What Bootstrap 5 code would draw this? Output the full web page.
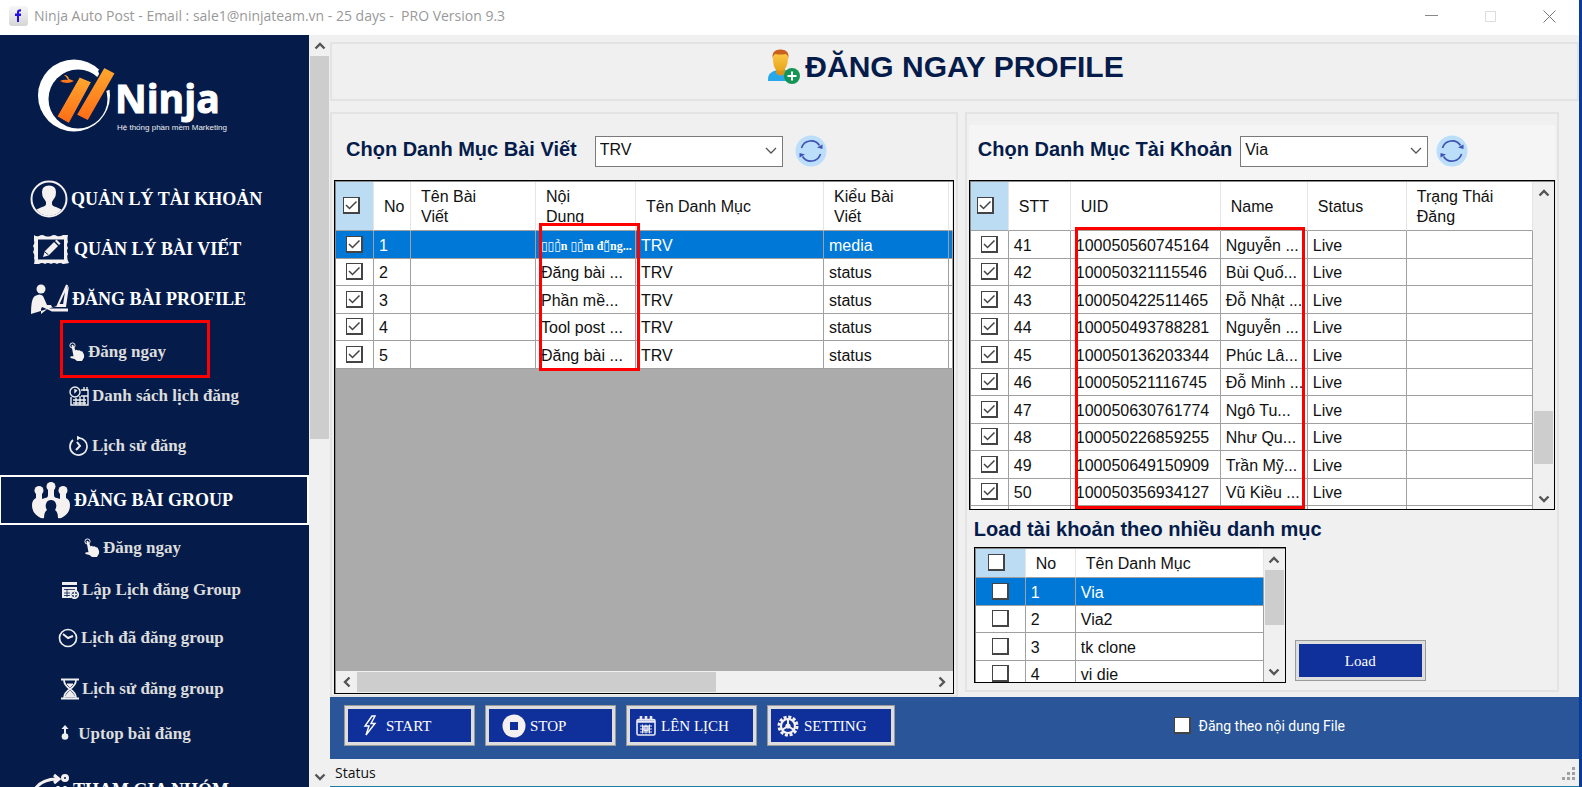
<!DOCTYPE html>
<html lang="vi">
<head>
<meta charset="utf-8">
<meta name="viewport" content="width=device-width, initial-scale=1">
<title>Ninja Auto Post</title>
<link rel="stylesheet" href="https://cdn.jsdelivr.net/npm/bootstrap@5.3.0/dist/css/bootstrap.min.css">
<script src="https://cdn.jsdelivr.net/npm/bootstrap@5.3.0/dist/js/bootstrap.bundle.min.js"></script>
<style>
:root{--navy:#051c4b;--face:#f0f0f0;--line:#a0a0a0;--pick:#0078d7}
body{font:16px/20px "Liberation Sans",Arial,sans-serif;color:#111;background:var(--face);border-right:3px solid #083c96}
.titlebar{height:35px;background:#fff;color:#999;font:14px/20px "Open Sans",sans-serif}
.titlebar button{width:59px;height:32px;background:none;border:0;padding:0}
.sidebar{width:309px;background:var(--navy)}
.menu{display:grid;grid-template-rows:50px 50px 50px 52px 40px 59px 50px 46px 38px 58px 44px 46px 66px;font-family:"Liberation Serif",serif;font-weight:700}
.menu a{display:flex;align-items:center;color:#ddd;font-size:17px;text-decoration:none;white-space:nowrap}
.menu a.top{color:#fff;font-size:18px;padding-left:30px}
.menu a.focused{border:2px solid #fff;border-left-width:1px;padding-left:31px}
.menu svg{flex:none;margin-right:3px}
.in-1{padding-left:58px}.in-2{padding-left:61px}.in-3{padding-left:69px}.in-4{padding-left:84px}
.hot{position:absolute;border:3px solid #f00;pointer-events:none}
.vbar,.hbar{display:flex;flex:none;background:var(--face)}
.vbar{flex-direction:column;width:21px;padding:0 1px}
.hbar{height:22px;padding:1px 0}
.vbar button,.hbar button{flex:none;border:0;padding:0;background:none;display:flex;align-items:center;justify-content:center}
.vbar button{height:21px}.hbar button{width:21px}
.knob{background:#cdcdcd}
.group{border:2px solid #e3e3e3;padding:0 2px}
.caption{font-weight:700;font-size:20px;line-height:24px;color:var(--navy);white-space:nowrap}
.heading{font-weight:700;font-size:30px;line-height:38px;color:var(--navy)}
.pick{width:188px;height:31px;border:1px solid #7a7a7a;border-radius:0;font-size:16px;line-height:20px;padding:0 24px 2px 4px;color:#111;background:#fff url("data:image/svg+xml,%3Csvg xmlns='http://www.w3.org/2000/svg' width='12' height='8'%3E%3Cpath d='M1 1l5 5 5-5' fill='none' stroke='%23555' stroke-width='1.3'/%3E%3C/svg%3E") no-repeat right 5px center;background-size:12px 8px}
.reload{border:0;padding:0;background:none;line-height:0}
.sheet{border:1px solid #000;background:#ababab;box-shadow:inset 1px 1px #888;padding:1px 0 0 1px;overflow:hidden;display:flex}
.sheet table{table-layout:fixed;width:100%;border-collapse:separate;border-spacing:0;background:#fff}
.sheet th{font-weight:400;height:49px;padding:2px 0 0 10px;vertical-align:middle;border-right:1px solid #e5e5e5;border-bottom:1px solid var(--line);overflow:hidden}
.sheet td{height:27px;padding:2px 0 0 5px;border-right:1px solid var(--line);border-bottom:1px solid var(--line);white-space:nowrap;overflow:hidden}
.sheet tr:nth-child(odd) td{height:28px}
.sheet th:first-child{background:#bcdcf4}
.sheet th:first-child,.sheet td:first-child{padding:0;text-align:center}
.sheet th:first-child input{margin-right:7px}
.sheet tr.on td{background:var(--pick);color:#fff}
.sheet.cats th{height:29px}
.box{appearance:none;display:inline-block;vertical-align:middle;width:17px;height:17px;margin:0 0 2px;border:2px solid #444;border-width:1px 2px 2px 1px;background:#fff}
.box:checked{background:#fff url("data:image/svg+xml,%3Csvg xmlns='http://www.w3.org/2000/svg' viewBox='0 0 14 14'%3E%3Cpath d='M2 7l3.500 3.500L12.500 3.500' fill='none' stroke='%23444' stroke-width='1.500'/%3E%3C/svg%3E") center/14px}
.glyphs{font:700 12px/16px "Liberation Serif","DejaVu Sans",serif}
.act{width:131px;height:41px;display:flex;align-items:center;background:#0f2f9b;color:#fff;border:4px solid #dedede;outline:1px solid #9a9a9a;outline-offset:-1px;border-radius:0;padding:0 6px;font:15px/20px "Liberation Serif",serif}
.actions{background:#2a5699;height:62px;padding:0 0 5px 14px;gap:10px}
.small-ui{font:14px/20px Roboto,sans-serif}
.statusbar{height:28px;border-bottom:1px solid #1c7ca6;font:14px/20px "Open Sans",sans-serif}
</style>
</head>
<body class="vh-100 d-flex flex-column overflow-hidden">
<svg width="0" height="0" class="position-absolute">
  <symbol id="up" viewBox="0 0 12 10"><path d="M1.500 7.500L6 3l4.500 4.500" fill="none" stroke="#555" stroke-width="2.400"/></symbol>
  <symbol id="tap" viewBox="0 0 16 20"><circle cx="3.500" cy="3.500" r="2.600" fill="none" stroke="#f5f1f1"/><path d="M2.500 3.500q1-1.500 2 0l2 5 1-.8 1.500.8 1.500-.3 1.500 1 1.500.3q2 3 1.500 6l-2 3.500H8l-2.500-2-4-1q-1-1.500 1-1.800h2z" fill="#f5f1f1"/></symbol>
  <symbol id="sync" viewBox="0 0 32 32"><circle cx="16" cy="16" r="15.500" fill="#bbdefb"/><g fill="none" stroke="#3f51b5" stroke-width="1.600"><path d="M6.500 13a10 10 0 0 1 18-2.500M25.500 19a10 10 0 0 1-18 2.500"/></g><path d="M22 12.500l5.500 1.500V9.500zM10 19.500L4.500 18v4.500z" fill="#3f51b5"/></symbol>
</svg>

<header class="titlebar d-flex align-items-center flex-shrink-0">
  <svg width="20" height="20" class="ms-2 me-1 mb-1 flex-shrink-0"><defs><linearGradient id="fb" x2="0" y2="1"><stop stop-color="#f7f7f7"/><stop offset="1" stop-color="#d5d5d5"/></linearGradient></defs><rect x="1" width="19" height="20" rx="3" fill="url(#fb)"/><path d="M9 16V10H7V7.500h2V6q0-3 4-2.800V5.500h-1q-1 0-1 1v1h2V10h-2v6z" fill="#2410e8"/></svg>
  <span class="flex-grow-1 pb-1" style="padding-left:2px">Ninja Auto Post - Email : sale1@ninjateam.vn - 25 days -&nbsp; PRO Version 9.3</span>
  <button type="button" aria-label="Minimize"><svg width="13" height="13"><path d="M0 3.500h13" stroke="#888"/></svg></button>
  <button type="button" aria-label="Maximize" disabled><svg width="13" height="18"><path d="M1.500 1.500h10v10h-10z" fill="none" stroke="#ddd"/></svg></button>
  <button type="button" aria-label="Close"><svg width="13" height="18"><path d="M.5.5l12 12M12.500.5l-12 12" stroke="#777"/></svg></button>
</header>

<div class="d-flex flex-grow-1 overflow-hidden">
  <aside class="sidebar flex-shrink-0 overflow-hidden">
    <svg width="309" height="139" viewBox="0 35 309 139" class="d-block" role="img" aria-label="Ninja">
      <defs><linearGradient id="or" x2="0" y2="1"><stop stop-color="#ffa82f"/><stop offset="1" stop-color="#ff6b14"/></linearGradient></defs>
      <circle cx="74" cy="95.500" r="36" fill="#fff"/><circle cx="78" cy="99" r="29.500" fill="#051c4b"/>
      <path d="M98 71l8-8 14 6-8 20-6 2z" fill="#051c4b"/>
      <g fill="url(#or)"><path d="M79.500 77l12 5-22.500 41.500-12-7z" stroke="#051c4b"/><path d="M104 67l11.500 6-27.500 48-12-6z" stroke="#051c4b" stroke-width="1.500"/>
      <path d="M60 81q4-2 8-1-1-3-4-5 4 0 5 4l5 2q-7 4-14 0z"/></g>
      <text x="115" y="113" font-family="Open Sans" font-weight="700" font-size="39" fill="#fff" stroke="#fff">Ninja</text>
      <text x="117" y="130" font-family="Liberation Sans" font-size="8" fill="#eee">Hệ thống phần mềm Marketing</text>
    </svg>
    <nav class="menu">
      <a class="top" href="#"><svg width="38" height="38"><circle cx="19" cy="19" r="17.500" fill="none" stroke="#f5f1f1" stroke-width="2"/><path d="M12 12q0-6.500 7-6.500t7 6.500q0 4-1.500 6t-2.500 4v2q0 2 4 3l5.500 2.500Q27 36 19 36T6.500 29.500L12 27q4-1 4-3v-2q-1-2-2.500-4T12 12z" fill="#f5f1f1"/></svg>QUẢN LÝ TÀI KHOẢN</a>
      <a class="top" href="#"><svg width="41" height="34"><path d="M4 3q2 2 5 1 3-2 6 0 3 1 6 0 3-2 6 0 3 1 6-1h5q-1 4 0 7-2 3 0 6-2 3 0 6-2 3 1 9-5 1-6 1-3-2-6 0-3-2-6 0-3-2-6 0-3-2-6 0H4q1-4 0-6 1-3-1-6 2-3 0-6 2-3 1-5z" fill="#f5f1f1"/><path d="M8 7.500h26v20H8z" fill="#051c4b"/><path d="M13 25l2-6L24 10l4 4-9.500 9.500zM25 9l1.500-1.500 4 4L29 13z" fill="#f5f1f1"/><path d="M15 20l3.500 3" stroke="#051c4b"/></svg>QUẢN LÝ BÀI VIẾT</a>
      <a class="top" href="#"><svg width="39" height="32"><circle cx="11" cy="6" r="4.500" fill="#f5f1f1"/><path d="M1 31q0-16 4-18 5-3 8 0l4 9h4l1 2h14l3-21-12 20M18 25.500h20v3H22l-3-1.500-7-3-1 2v5z" fill="#f5f1f1"/><path d="M37 2l-9 20h6z" fill="#051c4b" stroke="#f5f1f1" stroke-width="2"/></svg>ĐĂNG BÀI PROFILE</a>
      <a class="in-3 position-relative pt-1" href="#"><svg width="16" height="20"><use href="#tap"/></svg>Đăng ngay<span class="hot" style="left:60px;top:-4px;width:150px;height:58px"></span></a>
      <a class="in-3" href="#"><svg width="20" height="20" fill="none" stroke="#eee" stroke-width="1.400"><circle cx="6" cy="6" r="5"/><path d="M6 3v3l2-2M2 11v8h17V4h-7M4 14h13M4 17h13M7 12v7M11 10v9M15 10v9M12 10h7M15 1v4M18 1v4"/></svg>Danh sách lịch đăng</a>
      <a class="in-3" href="#"><svg width="20" height="20" fill="none" stroke="#eee" stroke-width="1.700"><path d="M9 2a8.500 8.500 0 1 1-5 2M4 4a8.500 8.500 0 0 0 0 13"/><path d="M8 6l3 4-4 4" stroke-width="2"/><path d="M8 0l3 2-3 2" fill="#eee" stroke-width="1"/></svg>Lịch sử đăng</a>
      <a class="top focused" href="#"><svg width="39" height="38" fill="#f5f1f1"><circle cx="19" cy="5.500" r="4.500"/><circle cx="7" cy="9.500" r="4.500"/><circle cx="31" cy="9.500" r="4.500"/><path d="M16 9h6v5q0 3 3 3l3 1v-6h6v5q4 2 4 7 0 8-7 12-3 2-5 1 0-6-3-8 2-3 1-6-1-4-5-4t-5 4q-1 3 1 6-3 2-3 8-2 1-5-1-7-4-7-12 0-5 4-7v-5h6v6l3-1q3 0 3-3z"/></svg>ĐĂNG BÀI GROUP</a>
      <a class="in-4" href="#"><svg width="16" height="20"><use href="#tap"/></svg>Đăng ngay</a>
      <a class="in-2" href="#"><svg width="18" height="18"><path d="M1 1h15v3H1zM1 6h15v4h-3l-3 3v4H1z" fill="#eee"/><path d="M3 8.500h11M3 12h6M3 14.500h6M6 8v8" stroke="#051c4b" stroke-width=".8"/><circle cx="13.500" cy="13.500" r="3.700" fill="#051c4b" stroke="#eee" stroke-width="1.800"/><path d="M11 13.500h5M13.500 11v5" stroke="#eee" stroke-width="1.500"/></svg>Lập Lịch đăng Group</a>
      <a class="in-1" href="#"><svg width="20" height="20" fill="none" stroke="#eee"><circle cx="10" cy="10" r="8.500" stroke-width="1.700"/><path d="M5 6l5 4 5-2" stroke-width="2"/></svg>Lịch đã đăng group</a>
      <a class="in-2" href="#"><svg width="18" height="22" fill="none" stroke="#eee"><path d="M0 1.500h18M0 20.500h18" stroke-width="2"/><path d="M3 2q0 5 6 9-6 4-6 9M15 2q0 5-6 9 6 4 6 9" stroke-width="1.700"/><path d="M4 19q3-5 5-6 2 1 5 6zM6 6h6l-3 3z" fill="#eee"/></svg>Lịch sử đăng group</a>
      <a class="in-2" href="#"><svg width="10" height="18" fill="#eee"><path d="M4 0l3.500 4H5v5H3V4H.5z"/><circle cx="4" cy="11.500" r="3.300"/></svg>&nbsp;Uptop bài đăng</a>
      <a class="top" href="#"><svg width="40" height="34" fill="none" stroke="#f5f1f1" stroke-width="3"><path d="M5 16Q12 6 27 6M24 2l5 4-5 4"/><circle cx="35" cy="5" r="2.500"/><path d="M28 13v6M35 13v6"/></svg>THAM GIA NHÓM</a>
    </nav>
  </aside>
  <div class="vbar">
    <button type="button" aria-label="Up"><svg width="12" height="10"><use href="#up"/></svg></button>
    <div class="knob" style="height:383px"></div>
    <button type="button" class="mt-auto" aria-label="Down"><svg width="12" height="10" transform="rotate(180)"><use href="#up"/></svg></button>
  </div>

  <main class="flex-grow-1 d-flex flex-column overflow-hidden" style="padding-top:7px">
    <section class="group d-flex justify-content-center align-items-start flex-shrink-0" style="height:59px;padding-right:20px">
      <svg width="34" height="36" class="mt-1 me-1"><defs><linearGradient id="sk" x2="0" y2="1"><stop stop-color="#ffcf4f"/><stop offset="1" stop-color="#e8a41c"/></linearGradient></defs><path d="M1 33q-1-9 9-11h8q10 2 9 11z" fill="#28a8ea"/><path d="M9 20h9v5q-4 5-9 0z" fill="#d9951a"/><path d="M6 10q0-8 7.500-8T21 10q0 12-7.500 13T6 10z" fill="url(#sk)"/><path d="M5.500 12Q4 1 13.500 1.500 23 1 21.500 12q0-5-3-6-5 1-10 0-3 1-3 6z" fill="#c9601c"/><circle cx="25" cy="28" r="8" fill="#159455"/><path d="M20.500 28h9M25 23.500v9" stroke="#fff" stroke-width="2"/></svg>
      <h1 class="heading mb-0 pt-1">ĐĂNG NGAY PROFILE</h1>
    </section>

    <div class="d-flex flex-grow-1 overflow-hidden" style="gap:7px;margin:11px 20px 0 0">
      <section class="group d-flex flex-column overflow-hidden" style="flex:628 1 0">
        <div class="d-flex align-items-center flex-shrink-0 pt-2" style="height:66px;padding-left:12px">
          <label class="caption pb-1" for="post-cat" style="margin-right:18px">Chọn Danh Mục Bài Viết</label>
          <select id="post-cat" class="form-select pick"><option>TRV</option></select>
          <button type="button" class="reload ms-2 ps-1" aria-label="Tải lại"><svg width="32" height="32"><use href="#sync"/></svg></button>
        </div>
        <div class="position-relative flex-grow-1 d-flex flex-column overflow-hidden" style="margin-bottom:1px">
          <div class="sheet flex-grow-1 flex-column">
            <table>
              <colgroup><col style="width:38px"><col style="width:37px"><col style="width:125px"><col style="width:100px"><col style="width:188px"><col style="width:125px"><col></colgroup>
              <thead><tr><th><input class="box" type="checkbox" checked aria-label="Chọn tất cả"></th><th>No</th><th>Tên Bài<br>Viết</th><th>Nội<br>Dung</th><th>Tên Danh Mục</th><th>Kiểu Bài<br>Viết</th><th></th></tr></thead>
              <tbody>
                <tr class="on"><td><input class="box" type="checkbox" checked aria-label="1"></td><td>1</td><td></td><td class="glyphs">▯▯▯̉n ▯▯̉m đ▯̃ng...</td><td>TRV</td><td>media</td><td></td></tr>
                <tr><td><input class="box" type="checkbox" checked aria-label="2"></td><td>2</td><td></td><td>Đăng bài ...</td><td>TRV</td><td>status</td><td></td></tr>
                <tr><td><input class="box" type="checkbox" checked aria-label="3"></td><td>3</td><td></td><td>Phần mề...</td><td>TRV</td><td>status</td><td></td></tr>
                <tr><td><input class="box" type="checkbox" checked aria-label="4"></td><td>4</td><td></td><td>Tool post ...</td><td>TRV</td><td>status</td><td></td></tr>
                <tr><td><input class="box" type="checkbox" checked aria-label="5"></td><td>5</td><td></td><td>Đăng bài ...</td><td>TRV</td><td>status</td><td></td></tr>
              </tbody>
            </table>
            <div class="hbar mt-auto">
              <button type="button" aria-label="Left"><svg width="12" height="10" transform="rotate(-90)"><use href="#up"/></svg></button>
              <div class="knob" style="width:359px"></div>
              <button type="button" class="ms-auto" aria-label="Right"><svg width="12" height="10" transform="rotate(90)"><use href="#up"/></svg></button>
            </div>
          </div>
          <span class="hot" style="left:205px;top:43px;width:101px;height:148px"></span>
        </div>
      </section>

      <section class="group d-flex flex-column overflow-hidden" style="flex:594 1 0;margin-bottom:5px">
        <div class="d-flex align-items-center flex-shrink-0" style="height:55px;margin-top:11px;padding:0 0 3px 9px;background:#f5f5f5">
          <label class="caption pb-1" for="acc-cat" style="margin-right:8px">Chọn Danh Mục Tài Khoản</label>
          <select id="acc-cat" class="form-select pick"><option>Via</option></select>
          <button type="button" class="reload ms-2" aria-label="Tải lại"><svg width="32" height="32"><use href="#sync"/></svg></button>
        </div>
        <div class="position-relative flex-grow-1 overflow-hidden d-flex">
          <div class="sheet flex-grow-1">
            <div class="flex-grow-1 overflow-hidden">
            <table>
              <colgroup><col style="width:38px"><col style="width:62px"><col style="width:150px"><col style="width:87px"><col style="width:99px"><col></colgroup>
              <thead><tr><th><input class="box" type="checkbox" checked aria-label="Chọn tất cả"></th><th>STT</th><th>UID</th><th>Name</th><th>Status</th><th>Trạng Thái<br>Đăng</th></tr></thead>
              <tbody>
                <tr><td><input class="box" type="checkbox" checked aria-label="41"></td><td>41</td><td>100050560745164</td><td>Nguyễn ...</td><td>Live</td><td></td></tr>
                <tr><td><input class="box" type="checkbox" checked aria-label="42"></td><td>42</td><td>100050321115546</td><td>Bùi Quố...</td><td>Live</td><td></td></tr>
                <tr><td><input class="box" type="checkbox" checked aria-label="43"></td><td>43</td><td>100050422511465</td><td>Đỗ Nhật ...</td><td>Live</td><td></td></tr>
                <tr><td><input class="box" type="checkbox" checked aria-label="44"></td><td>44</td><td>100050493788281</td><td>Nguyễn ...</td><td>Live</td><td></td></tr>
                <tr><td><input class="box" type="checkbox" checked aria-label="45"></td><td>45</td><td>100050136203344</td><td>Phúc Lâ...</td><td>Live</td><td></td></tr>
                <tr><td><input class="box" type="checkbox" checked aria-label="46"></td><td>46</td><td>100050521116745</td><td>Đỗ Minh ...</td><td>Live</td><td></td></tr>
                <tr><td><input class="box" type="checkbox" checked aria-label="47"></td><td>47</td><td>100050630761774</td><td>Ngô Tu...</td><td>Live</td><td></td></tr>
                <tr><td><input class="box" type="checkbox" checked aria-label="48"></td><td>48</td><td>100050226859255</td><td>Như Qu...</td><td>Live</td><td></td></tr>
                <tr><td><input class="box" type="checkbox" checked aria-label="49"></td><td>49</td><td>100050649150909</td><td>Trần Mỹ...</td><td>Live</td><td></td></tr>
                <tr><td><input class="box" type="checkbox" checked aria-label="50"></td><td>50</td><td>100050356934127</td><td>Vũ Kiều ...</td><td>Live</td><td></td></tr>
                <tr><td></td><td></td><td></td><td></td><td></td><td></td></tr>
              </tbody>
            </table>
            </div>
            <div class="vbar">
              <button type="button" aria-label="Up"><svg width="12" height="10"><use href="#up"/></svg></button>
              <div class="knob" style="height:53px;margin-top:208px"></div>
              <button type="button" class="mt-auto" aria-label="Down"><svg width="12" height="10" transform="rotate(180)"><use href="#up"/></svg></button>
            </div>
          </div>
          <span class="hot" style="left:106px;top:47px;width:230px;height:282px"></span>
        </div>
        <h2 class="caption mb-0 flex-shrink-0" style="height:37px;line-height:39px;padding-left:5px">Load tài khoản theo nhiều danh mục</h2>
        <div class="d-flex align-items-end flex-shrink-0" style="gap:9px;padding:0 0 7px 5px">
          <div class="sheet cats" style="width:312px;height:136px">
            <div class="flex-grow-1 overflow-hidden">
            <table>
              <colgroup><col style="width:50px"><col style="width:50px"><col></colgroup>
              <thead><tr><th><input class="box" type="checkbox" aria-label="Chọn tất cả"></th><th>No</th><th>Tên Danh Mục</th></tr></thead>
              <tbody>
                <tr class="on"><td><input class="box" type="checkbox" aria-label="Via"></td><td>1</td><td>Via</td></tr>
                <tr><td><input class="box" type="checkbox" aria-label="Via2"></td><td>2</td><td>Via2</td></tr>
                <tr><td><input class="box" type="checkbox" aria-label="tk clone"></td><td>3</td><td>tk clone</td></tr>
                <tr><td><input class="box" type="checkbox" aria-label="vi die"></td><td>4</td><td>vi die</td></tr>
              </tbody>
            </table>
            </div>
            <div class="vbar">
              <button type="button" aria-label="Up"><svg width="12" height="10"><use href="#up"/></svg></button>
              <div class="knob" style="height:55px"></div>
              <button type="button" class="mt-auto" aria-label="Down"><svg width="12" height="10" transform="rotate(180)"><use href="#up"/></svg></button>
            </div>
          </div>
          <button type="button" class="act justify-content-center" style="margin-bottom:2px">Load</button>
        </div>
      </section>
    </div>

    <div class="actions d-flex align-items-center flex-shrink-0">
      <button type="button" class="act" style="padding-left:15px"><svg width="15" height="21" class="me-2"><path d="M9 1L2 11h4L3 20l9-11.500H8L12 1z" fill="none" stroke="#fff" stroke-width="1.400"/></svg>START</button>
      <button type="button" class="act" style="padding-left:13px"><svg width="24" height="24" class="me-1"><circle cx="12" cy="12" r="11.500" fill="#f5f1f1"/><rect x="8" y="8" width="8" height="8" fill="#0f2f9b"/></svg>STOP</button>
      <button type="button" class="act"><svg width="21" height="20" class="me-1" fill="none" stroke="#e8e8f4"><rect x="1" y="3.500" width="18" height="15.500" rx="1.500" stroke-width="1.600"/><path d="M1 5.500h18M5 0v4M10 0v4M15 0v4" stroke-width="2.600"/><path d="M4 10h12M4 13h12M4 16h12M6.500 8.500v9M13.500 8.500v9M10 8.500v9"/><path d="M8 10.500h4v4H8z" stroke-width="1.500"/></svg>LÊN LỊCH</button>
      <button type="button" class="act" style="width:128px"><svg width="23" height="22" class="me-1"><circle cx="11" cy="11" r="9" fill="none" stroke="#f5f1f1" stroke-width="3" stroke-dasharray="3 1.710"/><circle cx="11" cy="11" r="7" fill="none" stroke="#f5f1f1" stroke-width="2.200"/><circle cx="11" cy="11" r="2.600" fill="#f5f1f1"/><path d="M11 11V4M11 11l-6 4M11 11l6 4" stroke="#f5f1f1" stroke-width="2"/></svg>SETTING</button>
      <div class="ms-auto d-flex align-items-center text-white small-ui" style="margin-right:234px">
        <input class="box m-0 me-2" type="checkbox" id="by-file"><label for="by-file">Đăng theo nội dung File</label>
      </div>
    </div>
    <footer class="statusbar d-flex align-items-center justify-content-between flex-shrink-0" style="padding:0 3px 0 5px">
      <span>Status</span>
      <svg width="15" height="15" fill="#a0a0a0" class="mt-1"><path d="M11 0h3v3h-3zM11 5h3v3h-3zM6 5h3v3H6zM11 10h3v3h-3zM6 10h3v3H6zM1 10h3v3H1z"/></svg>
    </footer>
  </main>
</div>
</body>
</html>
